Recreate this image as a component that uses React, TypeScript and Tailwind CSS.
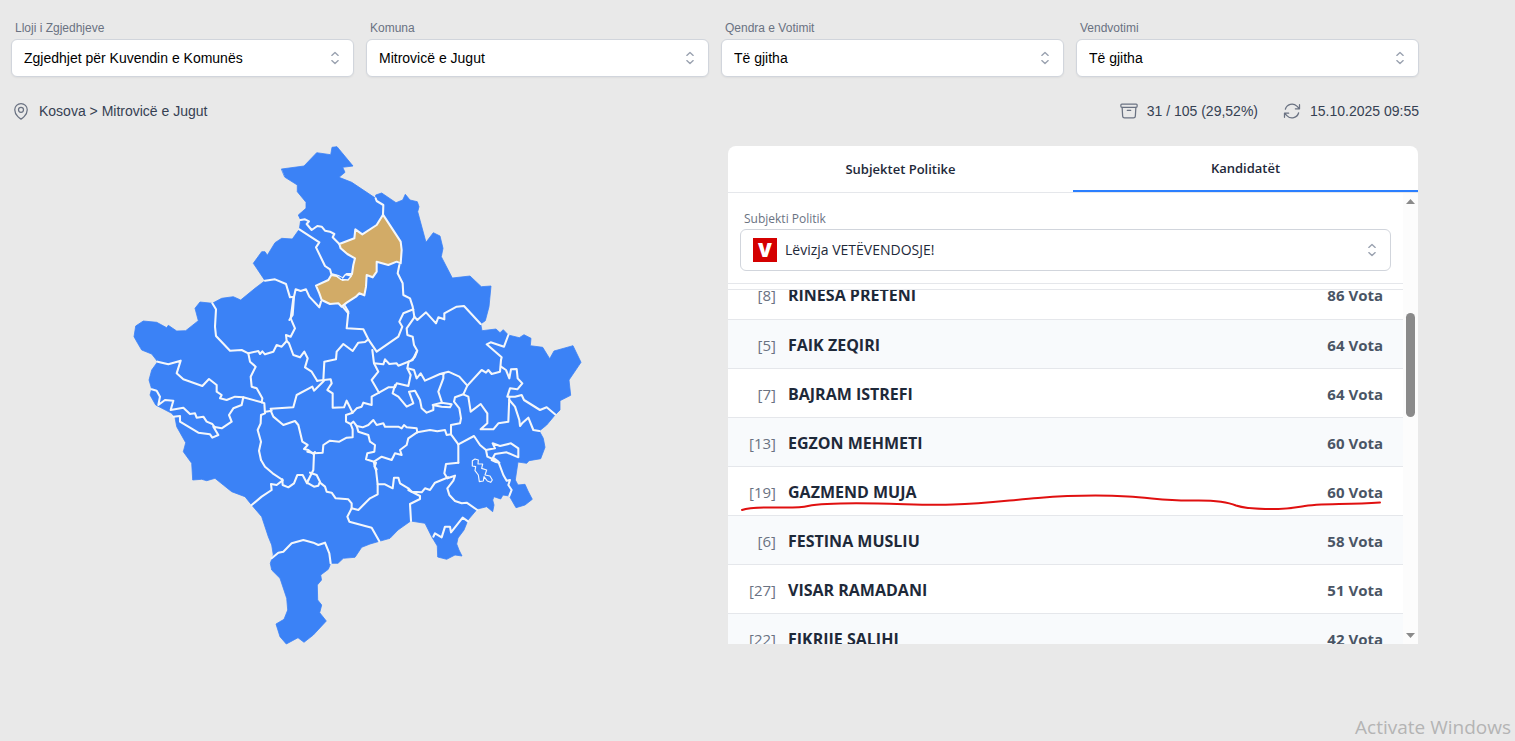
import { HiOutlineArchiveBox, HiOutlineArrowPath, HiOutlineMapPin } from "react-icons/hi2";

type Filter = { id: string; label: string; value: string };
type Candidate = { number: number; name: string; votes: number };
type BorderSheet = { x: number; y: number; lines: string[] };

const filters: Filter[] = [
  { id: "lloji", label: "Lloji i Zgjedhjeve", value: "Zgjedhjet për Kuvendin e Komunës" },
  { id: "komuna", label: "Komuna", value: "Mitrovicë e Jugut" },
  { id: "qendra", label: "Qendra e Votimit", value: "Të gjitha" },
  { id: "vendvotimi", label: "Vendvotimi", value: "Të gjitha" },
];

const candidates: Candidate[] = [
  { number: 8, name: "RINESA PRETENI", votes: 86 },
  { number: 5, name: "FAIK ZEQIRI", votes: 64 },
  { number: 7, name: "BAJRAM ISTREFI", votes: 64 },
  { number: 13, name: "EGZON MEHMETI", votes: 60 },
  { number: 19, name: "GAZMEND MUJA", votes: 60 },
  { number: 6, name: "FESTINA MUSLIU", votes: 58 },
  { number: 27, name: "VISAR RAMADANI", votes: 51 },
  { number: 22, name: "FIKRIJE SALIHI", votes: 42 },
];

const countryOutline =
  "281.7,169 304,166 316.7,152.7 330.7,154.7 332,147.3 337,146.7 353,166 342.7,167.3 345,172.3 339,177.3 351.7,182.3 375.7,198.3 375.7,195 381.7,193 396,202.7 402.7,200 405.3,194.3 410,200 417.3,201.7 419,206.7 417.7,211.7 426,242.3 433.3,232.7 440,236 443,248.3 441.3,256.7 452.3,278 470,276 481.3,286.7 491,286 489,306.7 485.3,320.7 480.7,324 482,330.7 496,329 500,332.7 503.3,329.7 508.3,335 519.3,337.7 524,334.7 531,338.3 530.3,345.7 542.7,347.3 549.7,358.7 554,351 573,345.7 581,362.3 569,380 570.7,395.3 560,400.7 560,410 555,415 546.7,425 539.3,431 543.3,438.3 545,447.3 540.7,458.7 529,460.7 526.7,463.3 518,462 515.3,480 518,485 525,484.3 528,491 532.3,499.3 525,505 516,507.7 509.3,496 503,495 500.7,499 494,496.7 492.7,500 494,505 492.7,511.7 486.7,506.7 477.3,509 468,520 464,530 458,538 456.7,544 459,550 462,556 455,555 446.7,559.3 437.7,557 437.3,546 431.7,536.7 425,523.3 410.7,521 398,530 390,538.3 379.3,541.3 370,544 361.7,547.3 355,557.3 343.3,558.3 338,563.3 330.7,563.3 328.3,569.3 320.7,575 321.5,580 317.3,585 317.7,600 321.7,605 319.7,612.7 326.3,621 313.3,635 304,642.3 298,637.7 286.3,644 280,636.7 276,624 284,619.3 287.7,610 286.7,598.3 280,578.3 271.7,570 270.3,563.3 273.3,555 271.7,545 268.3,536.7 261.7,516.7 251.7,505 245,496.7 231.7,491.7 223.3,485 215,478.3 206.7,480.7 201.7,479.3 192.7,480 191.7,463.3 183.3,451.7 185.7,442.7 176.7,426.7 175,417.3 171.7,413.3 155.7,405 150,395 151.7,389 149,380 151.7,370 157.7,361.7 151.7,354 141.7,350 137.7,343.3 134,336.7 135.7,326 143.3,321 156.7,322.3 166.7,327.7 168.3,325.3 176.7,331 185.7,330.7 198.3,320.7 195,308.3 200,302 212.3,303.3 221.7,298.3 233.3,296.7 240.7,300 255,288.3 265,280.7 253.3,263.3 261.7,251.7 265,251.7 267.3,255.3 275,242.7 281.7,238.3 292.3,239 299.3,229.3 300.7,220 298.3,215 306,208.3 306,202.3 297.3,191.7 297.3,185 285,177.3";

const selectedMunicipality =
  "328,312 332,325 352,342 375,355 370,375 366,402 355,415 338,420 320,408 304,405 295,420 258,437 268,460 275,480 300,492 325,490 335,500 350,488 378,470 388,460 403,466 408,440 410,405 428,412 440,395 440,365 475,375 500,365 512,370 515,330 512,305 459,224 440,255 397,283 376,268 373,295";

// Municipal borders, drawn in sheets at three units to the map unit.
const borderSheets: BorderSheet[] = [
  {
    x: 230,
    y: 140,
    lines: [
      "437,175 440,183 460,195 459,224",
      "212,240 225,238 237,244 230,252 245,270 262,258 275,260 285,272 300,275 313,282 308,292 328,312",
      "208,268 268,307 258,322 285,378 300,388 304,402 325,408 338,415 350,402 365,402 355,420 338,416",
      "105,422 135,418 168,432 180,472 192,470 197,448 212,453 228,448 238,470 268,502 273,485",
      "192,470 188,525 178,540",
      "508,375 503,400 518,430 520,465 540,475 548,500 553,530",
      "338,500 355,520",
    ],
  },
  {
    x: 390,
    y: 180,
    lines: [
      "73,410 82,420 108,397 138,430 145,412 163,418 163,400 200,380 222,378 272,432",
      "73,412 50,445 52,465 68,470 72,495 82,512 75,530 65,540",
      "355,465 342,500 302,487 290,493 335,532 333,540",
    ],
  },
  {
    x: 125,
    y: 280,
    lines: [
      "262,70 273,88 270,140 273,168 315,212 350,210 370,220 400,213 405,222 412,214 420,223 445,215 455,195 470,200 485,183 483,165 497,170 510,145 497,115 505,55",
      "485,183 492,190 505,225 525,232 538,215 548,235 540,262 560,275 577,303",
      "370,220 375,245 392,260 377,290 380,320 395,325 412,355 410,367 355,352 350,375 325,385 312,405 320,425 290,445 265,440 280,465 262,473 255,463 220,458 165,425 165,408 145,410",
      "98,245 130,253 167,242 155,280 175,298 232,318 252,297 275,315 275,335 290,345 285,355 305,360 330,350 355,352",
      "80,328 95,332 105,350 100,375 120,360 145,362 137,390 175,383 195,402 210,400 215,413 235,410 245,425 262,432 270,443",
      "410,367 418,370 420,400 408,405 407,430 398,450 408,485 402,512 408,540",
      "422,395 440,392 437,386 505,382 515,345 562,320 567,332 597,302",
      "437,392 445,410 475,435 510,423 520,435 532,485 548,495 537,507 550,510 565,522 570,516",
    ],
  },
  {
    x: 240,
    y: 300,
    lines: [
      "315,18 325,35 320,85 370,88 385,118 410,155 475,110 487,80 478,65 490,40 520,28",
      "385,118 375,126 355,128 338,153 310,132 290,155 288,178 253,185 250,240",
      "232,242 272,238 275,250 262,270 278,280 278,323 312,322 320,302 338,338 350,325 365,320 370,308 395,315 395,290 417,278 395,240 415,215 402,190 397,150",
      "402,190 430,193 435,178 448,192 470,190 475,197 518,180 530,155",
      "417,278 445,262 465,262 470,250 505,258 512,225 502,205 506,185",
      "503,205 522,210 530,235 542,220 555,242 600,222 612,221",
      "465,255 458,280 475,290 500,320 520,310 507,275 525,272 540,300 545,325 560,338 580,330 580,318",
      "338,338 318,345 318,365 332,372 340,365 350,378 368,382 385,375 400,360 410,375 430,370 435,380 475,380 485,385 492,375 500,382 530,385 532,397",
      "332,372 338,388 338,412 320,413 298,425 270,422 250,435 248,458 222,460 202,455",
      "222,460 220,510 205,540",
      "350,378 355,395 385,405 390,425 405,435 403,455 382,460 378,478 402,485 425,470 455,480 465,460 485,465 480,450 500,435 505,415 530,398",
      "402,487 404,500 410,508",
      "63,480 75,500 98,520 128,540",
    ],
  },
  {
    x: 400,
    y: 300,
    lines: [
      "303,180 300,215 275,222 265,210 258,218 245,210 202,257",
      "120,222 145,215 178,230 202,257 190,283 165,292 162,305 178,325 183,355 180,370 153,375 153,403 175,433",
      "130,222 130,235 115,275 125,305",
      "98,315 125,308 155,313 150,322 125,320 98,315",
      "190,283 205,290 212,335 242,312 262,340 262,370 242,388 280,388 295,370 325,365 328,290",
      "303,200 318,210 328,235 333,208 350,207 353,235 367,250 352,268 330,265 322,290 345,290 365,285 372,300 420,330 440,322 465,343",
      "328,300 345,320 358,360 360,378 368,368 385,353 400,390 418,393",
      "52,397 90,390 112,394 135,390 140,405 153,403",
      "175,433 222,408 240,435 258,450 262,470 285,480",
      "258,450 285,445 278,430 300,438 333,430 355,445 355,472 320,457 285,462 275,480 285,485 298,488",
      "175,433 175,488",
    ],
  },
  {
    x: 340,
    y: 420,
    lines: [
      "355,128 318,132 313,160 322,175 345,167 340,182 322,205 328,225 345,243 365,250 380,248 412,270",
      "325,172 285,188 270,210 255,205 245,217 215,215 205,205 180,190 175,173 162,173 158,205 135,193 113,193",
      "205,210 240,228 240,237 210,252 213,303",
      "108,150 113,193 113,223 90,235 55,270 35,265 22,290 28,305 95,323 118,364",
      "280,350 285,340 305,352 315,320 330,320 333,337 368,293 385,305",
      "462,115 475,125 490,165 500,182 510,180 505,195 515,210 508,228",
      "108,128 104,140 108,150",
    ],
  },
  {
    x: 170,
    y: 420,
    lines: [
      "415,180 411,190 398,165 382,165 372,190 355,202 338,195 337,178",
      "420,158 440,165 450,185 445,197 432,200 415,190",
      "450,188 465,200 470,215 485,218 497,235 535,238 545,250 545,266",
      "245,255 275,230 305,210 303,192 320,195 337,182",
      "305,415 325,398 340,395 365,370 400,360 430,368 445,375 465,368 478,400 482,430",
    ],
  },
];

const enclave =
  "397,122 405,117 415,120 414,132 428,132 425,145 440,150 435,165 450,168 457,180 452,187 442,183 432,170 430,183 418,185 415,165 405,152 407,140 397,138";

function SelectorIcon() {
  return (
    <svg
      viewBox="0 0 20 20"
      fill="none"
      stroke="currentColor"
      strokeWidth="1.35"
      strokeLinecap="round"
      strokeLinejoin="round"
      aria-hidden="true"
      className="pointer-events-none absolute inset-y-0 right-[9px] my-auto size-5 text-gray-400"
    >
      <path d="M6.800 7.400l3.200-3 3.200 3m0 5.200l-3.200 3-3.200-3" />
    </svg>
  );
}

function FilterSelect({ id, label, value }: Filter) {
  return (
    <div>
      <label htmlFor={id} className="block px-1 text-xs leading-4 text-gray-500">
        {label}
      </label>
      <div className="relative mt-[3px]">
        <select
          id={id}
          className="block h-[38px] w-full appearance-none rounded-md border border-gray-300 bg-white pr-10 pl-3 text-sm text-black shadow-xs"
        >
          <option>{value}</option>
        </select>
        <SelectorIcon />
      </div>
    </div>
  );
}

function MunicipalityMap() {
  return (
    <svg viewBox="124 146 464 500" role="img" aria-label="Kosova" className="w-[464px] max-w-full">
      <g strokeLinejoin="round" strokeLinecap="round">
        <polygon points={countryOutline} fill="#3b82f6" stroke="#3b82f6" strokeWidth="0.8" />
        {borderSheets.map((sheet) => (
          <g
            key={`${sheet.x}-${sheet.y}`}
            transform={`translate(${sheet.x} ${sheet.y}) scale(0.33333)`}
            fill="none"
            stroke="#f4f7fb"
            strokeWidth="6.2"
          >
            {sheet.lines.map((line) => (
              <polyline key={line} points={line} />
            ))}
          </g>
        ))}
        <g transform="translate(230 140) scale(0.33333)" stroke="#f4f7fb" strokeWidth="6.2">
          <polygon points={selectedMunicipality} fill="#d2ab67" />
          <path d="M318 406l14 12 22 2 10-12-18-4-8 10" fill="#3b82f6" strokeWidth="4" />
        </g>
        <g transform="translate(340 420) scale(0.33333)" fill="none" stroke="#f4f7fb" strokeWidth="3.5">
          <polygon points={enclave} />
        </g>
      </g>
    </svg>
  );
}

function PartyLogo() {
  return (
    <svg
      viewBox="0 0 24 24"
      aria-hidden="true"
      className="pointer-events-none absolute inset-y-0 left-[13px] my-auto size-6 overflow-visible"
    >
      <rect width="24" height="24" fill="#d40000" />
      <text
        x="12"
        y="19"
        textAnchor="middle"
        fill="#fff"
        fontFamily="Open Sans, sans-serif"
        fontSize="20"
        fontWeight="800"
      >
        V
      </text>
    </svg>
  );
}

function ScrollTrack() {
  return (
    <div className="flex w-[15px] shrink-0 flex-col items-center bg-[#fcfcfc] py-1.5" aria-hidden="true">
      <svg viewBox="0 0 9 5" className="h-[5px] w-[9px]">
        <path d="M0 5L4.500 0L9 5z" fill="#8a8a8a" />
      </svg>
      <div className="mt-[109px] h-[104px] w-[9px] rounded-full bg-[#8a8a8a]" />
      <svg viewBox="0 0 9 5" className="mt-auto h-[5px] w-[9px]">
        <path d="M0 0H9L4.500 5z" fill="#8a8a8a" />
      </svg>
    </div>
  );
}

function CandidateList() {
  return (
    <div className="relative min-h-0 flex-1 overflow-hidden">
      <table className="-mt-5 w-full border-collapse text-[15px] leading-6">
        <tbody>
          {candidates.map((candidate) => (
            <tr key={candidate.number} className="h-[49px] border-b border-gray-200 even:bg-[#f8fafc]">
              <td className="w-12 p-0 pt-0.5 text-right text-gray-500">[{candidate.number}]</td>
              <td className="p-0 pt-0.5 pl-3 text-base leading-6 font-bold text-gray-800">{candidate.name}</td>
              <td className="p-0 pt-0.5 pr-5 text-right font-bold text-gray-600">{candidate.votes} Vota</td>
            </tr>
          ))}
        </tbody>
      </table>
      <svg
        viewBox="0 0 675 24"
        fill="none"
        aria-hidden="true"
        className="pointer-events-none absolute top-[200px] left-0 w-full"
      >
        <path
          d="M14 20C22 17 32 17.500 46 17.500C62 17.500 72 18 80 16C98 12.500 125 13 150 13.500C180 14 200 15.500 225 14.500C260 14 285 9.500 310 8C335 6 365 4.500 400 6.500C425 8 440 11 465 10.500C490 10 500 12 508 15.500C520 19.500 552 20.500 574 16.500C592 13 615 15 652 12.500"
          stroke="#e01010"
          strokeWidth="2"
          strokeLinecap="round"
        />
      </svg>
    </div>
  );
}

function ResultsCard() {
  return (
    <div className="flex h-[498px] flex-col overflow-hidden rounded-t-lg bg-white font-['Open_Sans','Noto_Sans',sans-serif]">
      <div
        className="grid h-[47px] shrink-0 grid-cols-2 border-b border-gray-200 text-[13px] font-semibold text-gray-800"
        role="tablist"
      >
        <button type="button" role="tab" aria-selected="false" className="pt-0.5">
          Subjektet Politike
        </button>
        <button type="button" role="tab" aria-selected="true" className="border-b-2 border-blue-500 pt-0.5">
          Kandidatët
        </button>
      </div>
      <div className="flex min-h-0 flex-1">
        <div className="flex min-w-0 flex-1 flex-col">
          <div className="border-b border-gray-200 px-3 pt-[18px] pb-3">
            <label htmlFor="subjekti" className="block px-1 text-xs leading-4 text-gray-500">
              Subjekti Politik
            </label>
            <div className="relative mt-0.5">
              <select
                id="subjekti"
                className="block h-[42px] w-full appearance-none rounded-md border border-gray-300 bg-white pr-10 pl-11 text-sm font-medium text-gray-800"
              >
                <option>Lëvizja VETËVENDOSJE!</option>
              </select>
              <PartyLogo />
              <SelectorIcon />
            </div>
          </div>
          <div className="h-1.5 shrink-0 border-b border-gray-200" />
          <CandidateList />
        </div>
        <ScrollTrack />
      </div>
    </div>
  );
}

export default function App() {
  return (
    <div className="relative min-h-screen bg-[#e9e9e9] font-['Liberation_Sans',Arial,sans-serif]">
      <main className="pt-5 pr-24 pl-[11px]">
        <div className="grid grid-cols-4 gap-3">
          {filters.map((filter) => (
            <FilterSelect key={filter.id} {...filter} />
          ))}
        </div>
        <div className="mt-6 flex items-center justify-between text-sm leading-5 text-gray-700">
          <div className="flex items-center gap-2">
            <HiOutlineMapPin className="size-5 text-gray-500" />
            <span>Kosova &gt; Mitrovicë e Jugut</span>
          </div>
          <div className="flex items-center gap-6">
            <div className="flex items-center gap-2">
              <HiOutlineArchiveBox className="size-5 text-gray-500" />
              <span>31 / 105 (29,52%)</span>
            </div>
            <div className="flex items-center gap-2">
              <HiOutlineArrowPath className="size-5 text-gray-500" />
              <span>15.10.2025 09:55</span>
            </div>
          </div>
        </div>
        <div className="mt-[25px] grid grid-cols-2 gap-[27px] pr-px">
          <div className="flex items-start justify-center">
            <MunicipalityMap />
          </div>
          <ResultsCard />
        </div>
      </main>
      <p className="pointer-events-none absolute right-1 bottom-0 font-['Open_Sans','Noto_Sans',sans-serif] text-[19px] leading-7 text-[#b4b4b4]">
        Activate Windows
      </p>
    </div>
  );
}
